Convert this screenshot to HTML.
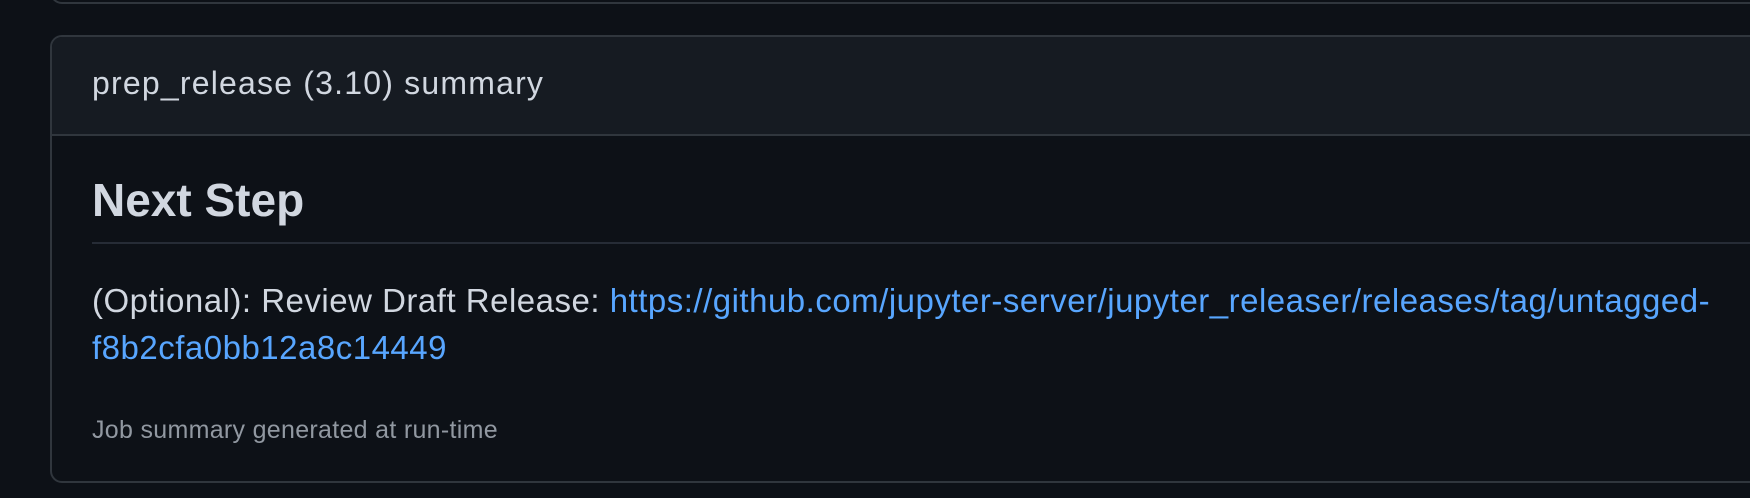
<!DOCTYPE html>
<html><head><style>
html,body{margin:0;padding:0;background:#0d1117;width:1750px;height:498px;overflow:hidden;font-family:"Liberation Sans",sans-serif}
.prev{position:absolute;left:50px;top:-20px;width:1760px;height:20px;border:2px solid #30363d;border-radius:12px;}
.card{position:absolute;left:50px;top:35px;width:1760px;height:444px;border:2px solid #30363d;border-radius:12px;background:#0d1117;overflow:hidden}
.hd{position:absolute;left:0;top:0;right:0;height:97px;background:#161b22;border-bottom:2px solid #30363d}
.t{position:absolute;white-space:nowrap;color:#d1d7e0}
</style></head><body>
<div class="prev"></div>
<div class="card">
<div class="hd"></div>
<div class="t" style="left:40px;top:28px;font-size:32px;letter-spacing:1.2px;">prep_release (3.10) summary</div>
<div class="t" style="left:40px;top:136px;font-size:46px;font-weight:bold;">Next Step</div>
<div style="position:absolute;left:40px;top:205px;width:1690px;height:2px;background:#262c36"></div>
<div class="t" style="left:40px;top:240px;font-size:33px;line-height:47px;letter-spacing:0.5px;">(Optional): Review Draft Release: <span style="color:#58a6ff">https://github.com/jupyter-server/jupyter_releaser/releases/tag/untagged-</span><br><span style="color:#58a6ff">f8b2cfa0bb12a8c14449</span></div>
<div class="t" style="left:40px;top:379px;font-size:25px;color:#9198a1;letter-spacing:0.3px;">Job summary generated at run-time</div>
</div>
</body></html>
